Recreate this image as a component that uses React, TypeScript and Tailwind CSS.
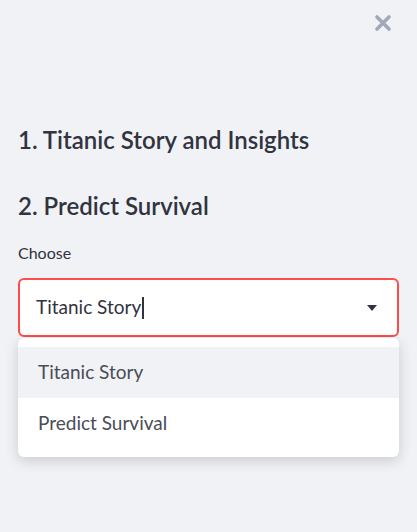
import React from "react";

export default function App() {
  return (
    <div
      className="w-[417px] h-[532px] bg-[#f0f2f6] relative overflow-hidden text-[#31333f]"
      style={{ fontFamily: '"Lato", "Open Sans", sans-serif' }}
    >
      <div className="flex justify-end pt-[14px] pr-[25px]">
        <svg width="18" height="18" viewBox="0 0 18 18">
          <path d="M3 3 L15 15 M15 3 L3 15" stroke="#a3a8b8" strokeWidth="3.6" strokeLinecap="round" />
        </svg>
      </div>
      <div className="px-[18px] pt-[92px]">
        <h3 className="text-[24px] font-semibold leading-[32px]">1. Titanic Story and Insights</h3>
        <h3 className="text-[24px] font-semibold leading-[32px] mt-[34px]">2. Predict Survival</h3>
        <div className="mt-[21px] text-[16px] leading-[20px]">Choose</div>
        <div className="mt-[15px] h-[59px] rounded-[6px] border-2 border-[#ff4b4b] bg-white flex items-center pl-[16px] pr-[20px]">
          <div className="flex-1 flex items-center text-[19px]">
            <span>Titanic Story</span>
            <span className="inline-block w-[2px] h-[22px] bg-[#31333f] ml-[1px]" />
          </div>
          <svg width="10" height="6" viewBox="0 0 10 6">
            <path d="M0 0 L10 0 L5 6 Z" fill="#31333f" />
          </svg>
        </div>
        <div className="mt-[1px] rounded-[6px] bg-white shadow-[0_4px_14px_rgba(0,0,0,0.16)] py-[9px]">
          <div className="h-[51px] bg-[#f0f2f6] flex items-center pl-[20px] text-[19px] text-[#4a4c57]">Titanic Story</div>
          <div className="h-[50px] flex items-center pl-[20px] text-[19px] text-[#4a4c57]">Predict Survival</div>
        </div>
      </div>
    </div>
  );
}
